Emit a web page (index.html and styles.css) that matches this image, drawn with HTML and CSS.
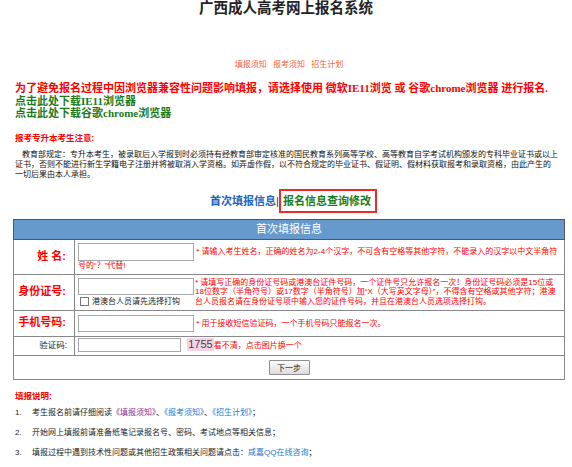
FILE: index.html
```html
<!DOCTYPE html>
<html lang="zh-CN">
<head>
    <meta charset="UTF-8">
    <title>广西成人高考网上报名系统</title>
    <link rel="stylesheet" href="styles.css">
</head>
<body>
    <h1 class="site-title">广西成人高考网上报名系统</h1>

    <div class="wrap">
        <div class="top-links">
            <a href="#">填报须知</a>
            <a href="#">报考须知</a>
            <a href="#">招生计划</a>
        </div>

        <div class="browser-tip">
            <p class="tip-warn">为了避免报名过程中因浏览器兼容性问题影响填报，请选择使用 微软IE11浏览 或 谷歌chrome浏览器 进行报名.</p>
            <p><a href="#">点击此处下载IE11浏览器</a></p>
            <p><a href="#">点击此处下载谷歌chrome浏览器</a></p>
        </div>

        <div class="notice">
            <h3 class="notice-title">报考专升本考生注意:</h3>
            <p class="notice-text">教育部规定：专升本考生，被录取后入学报到时必须持有经教育部审定核准的国民教育系列高等学校、高等教育自学考试机构颁发的专科毕业证书或以上证书，否则不能进行新生学籍电子注册并将被取消入学资格。如弄虚作假，以不符合规定的毕业证书、假证明、假材料获取报考和录取资格，由此产生的一切后果由本人承担。</p>
        </div>

        <div class="tabs"><a href="#" class="tab-link">首次填报信息</a><span class="tab-sep">|</span><a href="#" class="tab-current">报名信息查询修改</a></div>

        <table class="form-table">
            <tr>
                <th colspan="2">首次填报信息</th>
            </tr>
            <tr>
                <td class="label">姓&nbsp;名:</td>
                <td class="field-cell"><input type="text" class="text-input"> <span class="hint">* 请输入考生姓名，正确的姓名为2-4个汉字，不可含有空格等其他字符，不能录入的汉字以中文半角符号的“？”代替!</span></td>
            </tr>
            <tr>
                <td class="label">身份证号:</td>
                <td class="field-cell id-cell">
                    <div class="id-box">
                        <div class="id-left">
                            <input type="text" class="text-input id-input">
                            <label class="hk-check"><input type="checkbox">港澳台人员请先选择打钩</label>
                        </div>
                        <div class="hint">* 请填写正确的身份证号码或港澳台证件号码，一个证件号只允许报名一次！身份证号码必须是15位或18位数字（半角符号）或17数字（半角符号）加“X（大写英文字母）”，不得含有空格或其他字符；港澳台人员报名请在身份证号项中输入您的证件号码，并且在港澳台人员选项选择打钩。</div>
                    </div>
                </td>
            </tr>
            <tr>
                <td class="label">手机号码:</td>
                <td class="field-cell phone-cell"><input type="text" class="text-input phone-input"> <span class="hint">* 用于接收短信验证码，一个手机号码只能报名一次。</span></td>
            </tr>
            <tr>
                <td class="label label-plain">验证码:</td>
                <td class="field-cell code-cell"><input type="text" class="text-input code-input"> <span class="captcha">1755</span><span class="hint">看不清，点击图片换一个</span></td>
            </tr>
            <tr>
                <td colspan="2" class="submit-cell"><button type="button" class="next-btn">下一步</button></td>
            </tr>
        </table>

        <div class="instructions">
            <h3>填报说明:</h3>
            <ol class="steps">
                <li><span class="step-num">1.</span>考生报名前请仔细阅读<a href="#" class="visited">《填报须知》</a>、<a href="#">《报考须知》</a>、<a href="#">《招生计划》</a>；</li>
                <li><span class="step-num">2.</span>开始网上填报前请准备纸笔记录报名号、密码、考试地点等相关信息；</li>
                <li><span class="step-num">3.</span>填报过程中遇到技术性问题或其他招生政策相关问题请点击：<a href="#">咸嘉QQ在线咨询</a>；</li>
            </ol>
        </div>
    </div>
</body>
</html>
```

FILE: styles.css
```css
body {
    margin: 0;
    background-color: #fff;
    color: #222;
    font-family: "Liberation Sans", "Noto Sans CJK SC", sans-serif;
}
.site-title {
    margin: 0;
    font: bold 14.5px/17px "Liberation Serif", "Noto Sans CJK SC", serif;
    text-align: center;
    color: #222;
}
.wrap {
    width: 552px;
    margin-left: 13px;
}
.top-links {
    margin-top: 43px;
    text-align: center;
    font-size: 8px;
    line-height: 10px;
}
.top-links a {
    margin: 0 2px;
    color: #f5643c;
    text-decoration: none;
}
.browser-tip {
    margin-top: 12px;
    padding-left: 2px;
    font: bold 11px/12.5px "Liberation Serif", "Noto Sans CJK SC", serif;
}
.browser-tip p {
    margin: 0;
}
.tip-warn {
    color: #f00;
}
.browser-tip a {
    color: #1b7a1b;
    text-decoration: none;
}
.notice {
    margin-top: 13.5px;
    padding-left: 2px;
}
.notice-title {
    margin: 0;
    font-size: 8.5px;
    line-height: 10px;
    color: #f00;
}
.notice-text {
    width: 543.5px;
    margin: 7px 0 0;
    font-size: 8px;
    line-height: 9.8px;
    text-indent: 7px;
    color: #111;
}
.tabs {
    margin-top: 9.6px;
    padding-left: 9px;
    height: 24px;
    line-height: 24px;
    text-align: center;
    font-size: 11px;
    font-weight: bold;
}
.tab-link {
    color: #1e64c0;
    text-decoration: none;
}
.tab-sep {
    font-weight: normal;
    color: #333;
}
.tab-current {
    display: inline-block;
    vertical-align: top;
    border: 2px solid #ee2b2b;
    padding: 0 4px 0 2px;
    line-height: 20px;
    color: #1b7a1b;
    text-decoration: none;
}

/* form table */
.form-table {
    width: 552px;
    margin-top: 6px;
    border-collapse: collapse;
    border: 1px solid #555;
    font-size: 8px;
    line-height: 9.6px;
}
.form-table th {
    height: 19px;
    padding: 0;
    border: 1px solid #555;
    background-color: #6699cc;
    color: #fff;
    font-size: 11px;
    font-weight: normal;
}
.form-table td {
    border: 1px solid #888;
    padding: 3px 4px 3px 3px;
}
.form-table .label {
    width: 49px;
    padding: 0 8px 0 3px;
    text-align: right;
    color: #f00;
    font-size: 11px;
    font-weight: bold;
}
.form-table .label-plain {
    padding-right: 7px;
    color: #222;
    font-size: 8.5px;
    font-weight: normal;
}
.text-input {
    box-sizing: border-box;
    width: 116px;
    height: 18px;
    margin: 0;
    padding: 0 2px;
    border: 1px solid #a5a9ae;
    vertical-align: middle;
}
.hint {
    color: #f00;
}
.id-box {
    display: flex;
}
.id-left {
    flex: none;
    width: 117px;
}
.id-input {
    display: block;
    height: 17px;
}
.hk-check {
    display: flex;
    align-items: center;
    margin-top: 2px;
    height: 10px;
    color: #222;
}
.hk-check input {
    appearance: none;
    width: 9px;
    height: 9px;
    margin: 0 3px 0 2px;
    border: 1px solid #777;
    background-color: #fff;
}
.form-table .phone-cell {
    padding-top: 4px;
    padding-bottom: 4px;
}
.phone-input {
    height: 17px;
}
.form-table .code-cell {
    padding-top: 1px;
}
.code-input {
    width: 103px;
    height: 14px;
}
.captcha {
    display: inline-block;
    height: 13px;
    padding: 0 1px;
    margin-left: 4px;
    background-color: #f5d3e6;
    color: #444;
    font-size: 11px;
    line-height: 13px;
}
.form-table .submit-cell {
    padding: 4px;
    text-align: center;
}
.next-btn {
    width: 41px;
    height: 15px;
    padding: 0;
    border: 1px solid #8e8f8f;
    border-radius: 1px;
    background: linear-gradient(#fafafa, #dcdcdc);
    color: #222;
    font-family: "Liberation Sans", "Noto Sans CJK SC", sans-serif;
    font-size: 8px;
    vertical-align: top;
}

/* instructions */
.instructions {
    margin-top: 11px;
    padding-left: 2px;
}
.instructions h3 {
    margin: 0;
    font-size: 8.5px;
    line-height: 10px;
    color: #f00;
}
.steps {
    list-style: none;
    margin: 7px 0 0;
    padding: 0;
    font-size: 8px;
    line-height: 10px;
}
.steps li {
    margin-bottom: 9.6px;
}
.step-num {
    display: inline-block;
    width: 17px;
}
.steps a {
    color: #2a78cc;
    text-decoration: none;
}
.steps a.visited {
    color: #8a2a8a;
}
```
